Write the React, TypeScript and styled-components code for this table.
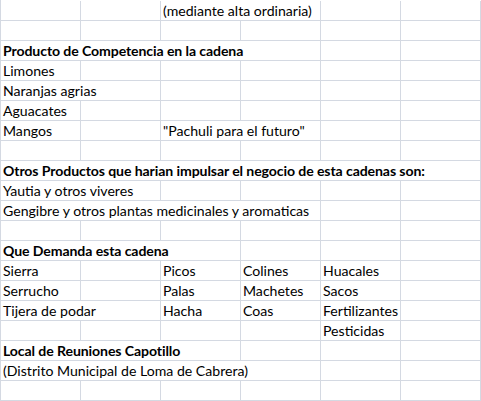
import React from "react";
import styled, { createGlobalStyle } from "styled-components";

const Global = createGlobalStyle`
  html, body { margin: 0; padding: 0; background: #ffffff; }
  body { font-family: Lato, "Open Sans", sans-serif; }
`;

const Sheet = styled.div`
  display: grid;
  grid-template-columns: repeat(6, 80px);
  grid-auto-rows: 20px;
  width: 481px;
  box-sizing: border-box;
  border-left: 1px solid #d4d9e2;
  padding-top: 1px;
  background: #ffffff;
  overflow: hidden;
`;

const Cell = styled.div<{ $span: number; $bold?: boolean }>`
  grid-column: span ${(p) => p.$span};
  box-sizing: border-box;
  border-right: 1px solid #d4d9e2;
  border-bottom: 1px solid #d4d9e2;
  display: flex;
  align-items: flex-end;
  padding: 0 0 0 2px;
  font-size: 14.1px;
  line-height: 18px;
  color: #000000;
  font-weight: ${(p) => (p.$bold ? 700 : 400)};
  letter-spacing: ${(p) => (p.$bold ? "-0.1px" : "0")};
  white-space: nowrap;
  overflow: visible;
`;

type C = { t?: string; s?: number; b?: boolean };

const rows: C[][] = [
  [{}, {}, { t: "(mediante alta ordinaria)", s: 2 }, {}, {}],
  [{}, {}, {}, {}, {}, {}],
  [{ t: "Producto de Competencia en la cadena", s: 4, b: true }, {}, {}],
  [{ t: "Limones" }, {}, {}, {}, {}, {}],
  [{ t: "Naranjas agrias", s: 2 }, {}, {}, {}, {}],
  [{ t: "Aguacates" }, {}, {}, {}, {}, {}],
  [{ t: "Mangos" }, {}, { t: "\"Pachuli para el futuro\"", s: 2 }, {}, {}],
  [{}, {}, {}, {}, {}, {}],
  [{ t: "Otros Productos que harian impulsar el negocio de esta cadenas son:", s: 6, b: true }],
  [{ t: "Yautia y otros viveres", s: 2 }, {}, {}, {}, {}],
  [{ t: "Gengibre y otros plantas medicinales y aromaticas", s: 4 }, {}, {}],
  [{}, {}, {}, {}, {}, {}],
  [{ t: "Que Demanda esta cadena", s: 3, b: true }, {}, {}, {}],
  [{ t: "Sierra" }, {}, { t: "Picos" }, { t: "Colines" }, { t: "Huacales" }, {}],
  [{ t: "Serrucho" }, {}, { t: "Palas" }, { t: "Machetes" }, { t: "Sacos" }, {}],
  [{ t: "Tijera de podar", s: 2 }, { t: "Hacha" }, { t: "Coas" }, { t: "Fertilizantes" }, {}],
  [{}, {}, {}, {}, { t: "Pesticidas" }, {}],
  [{ t: "Local de Reuniones Capotillo", s: 3, b: true }, {}, {}, {}],
  [{ t: "(Distrito Municipal de Loma de Cabrera)", s: 4 }, {}, {}],
  [{}, {}, {}, {}, {}, {}],
];

export default function App() {
  return (
    <>
      <Global />
      <Sheet>
        {rows.map((r, ri) =>
          r.map((c, ci) => (
            <Cell key={`${ri}-${ci}`} $span={c.s ?? 1} $bold={c.b}>
              {c.t ?? ""}
            </Cell>
          ))
        )}
      </Sheet>
    </>
  );
}
